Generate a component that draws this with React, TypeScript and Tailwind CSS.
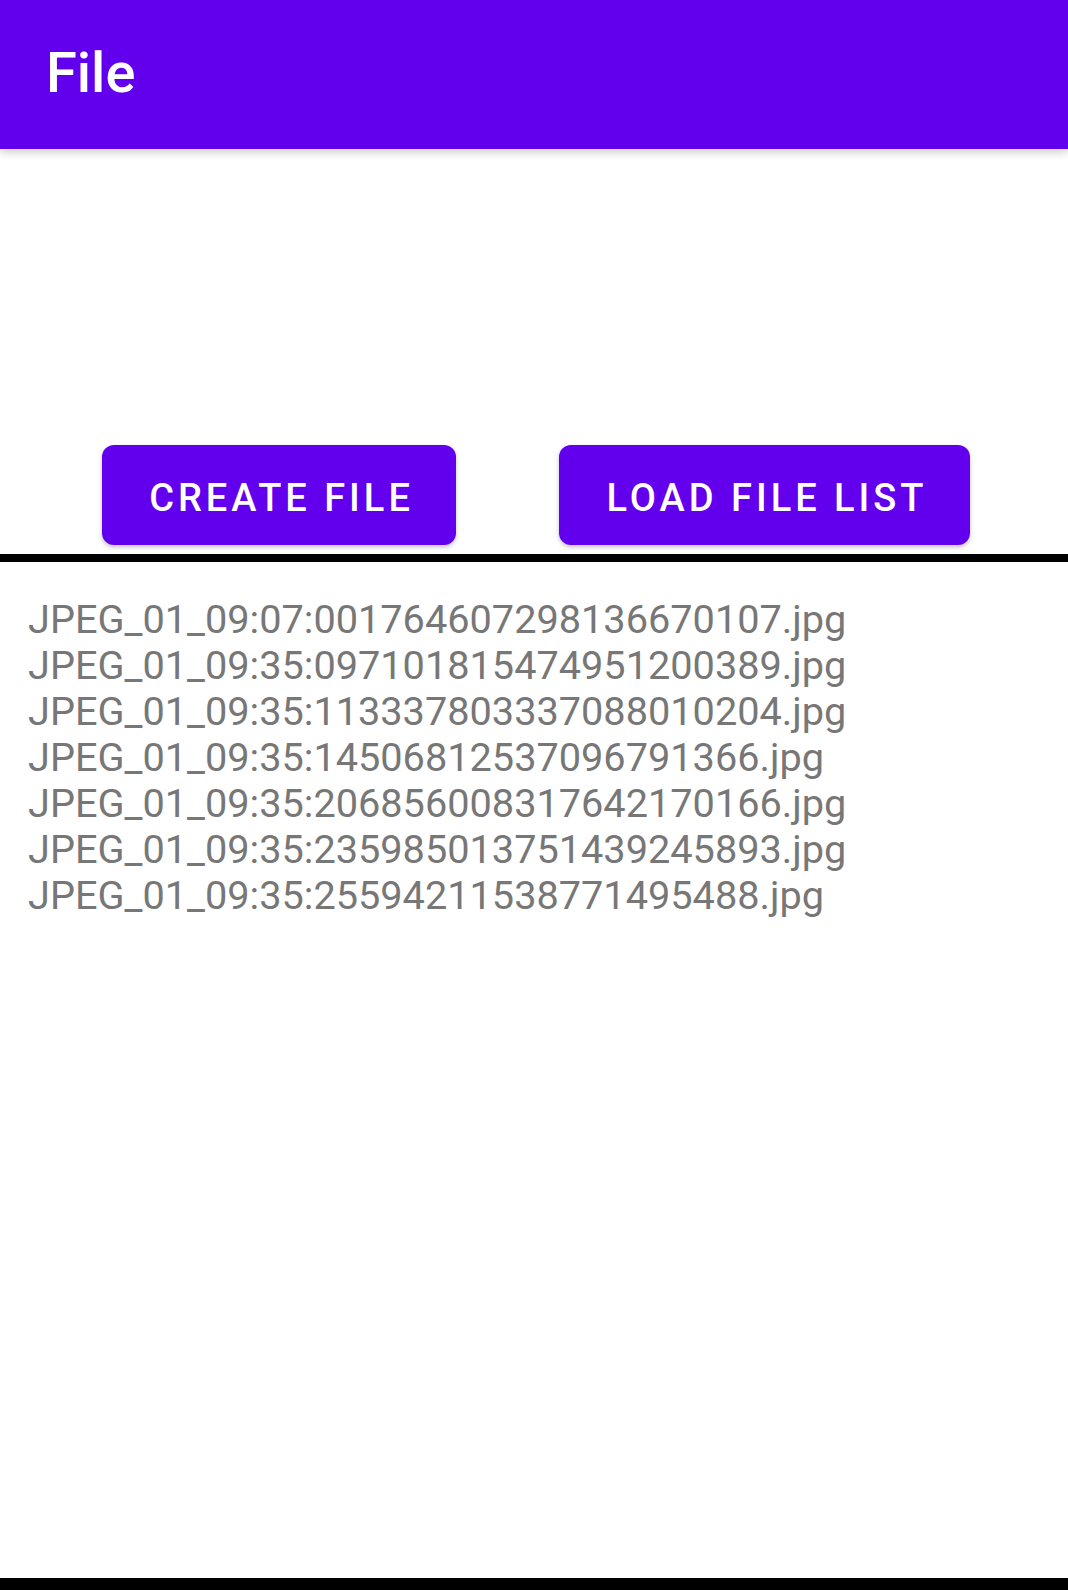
const files = [
  'JPEG_01_09:07:001764607298136670107.jpg',
  'JPEG_01_09:35:097101815474951200389.jpg',
  'JPEG_01_09:35:113337803337088010204.jpg',
  'JPEG_01_09:35:14506812537096791366.jpg',
  'JPEG_01_09:35:206856008317642170166.jpg',
  'JPEG_01_09:35:235985013751439245893.jpg',
  'JPEG_01_09:35:25594211538771495488.jpg',
];

export default function App() {
  return (
    <div className="min-h-[1590px] w-[1068px] bg-white flex flex-col font-['Roboto',sans-serif]">
      <header className="h-[149px] bg-[#6200ee] flex items-center pl-[46px] shadow-[0_4px_8px_rgba(0,0,0,0.18)] relative z-10">
        <h1 className="text-[56px] font-medium text-white leading-none -mt-[3px]">File</h1>
      </header>

      <div className="pt-[296px] pl-[102px] flex gap-[103px]">
        <button className="w-[354px] h-[100px] pt-[6px] pl-[5px] bg-[#6200ee] rounded-[12px] text-white text-[38px] font-medium tracking-[0.105em] shadow-[0_2px_4px_rgba(0,0,0,0.25)]">
          CREATE FILE
        </button>
        <button className="w-[411px] h-[100px] pt-[6px] pl-[5px] bg-[#6200ee] rounded-[12px] text-white text-[38px] font-medium tracking-[0.105em] shadow-[0_2px_4px_rgba(0,0,0,0.25)]">
          LOAD FILE LIST
        </button>
      </div>

      <div className="mt-[9px] h-[8px] bg-black" />

      <ul className="pt-[35px] pl-[28px] flex-1">
        {files.map((f) => (
          <li key={f} className="text-[39.7px] leading-[46px] text-[#777777]">
            {f}
          </li>
        ))}
      </ul>

      <div className="h-[12px] bg-black" />
    </div>
  );
}
